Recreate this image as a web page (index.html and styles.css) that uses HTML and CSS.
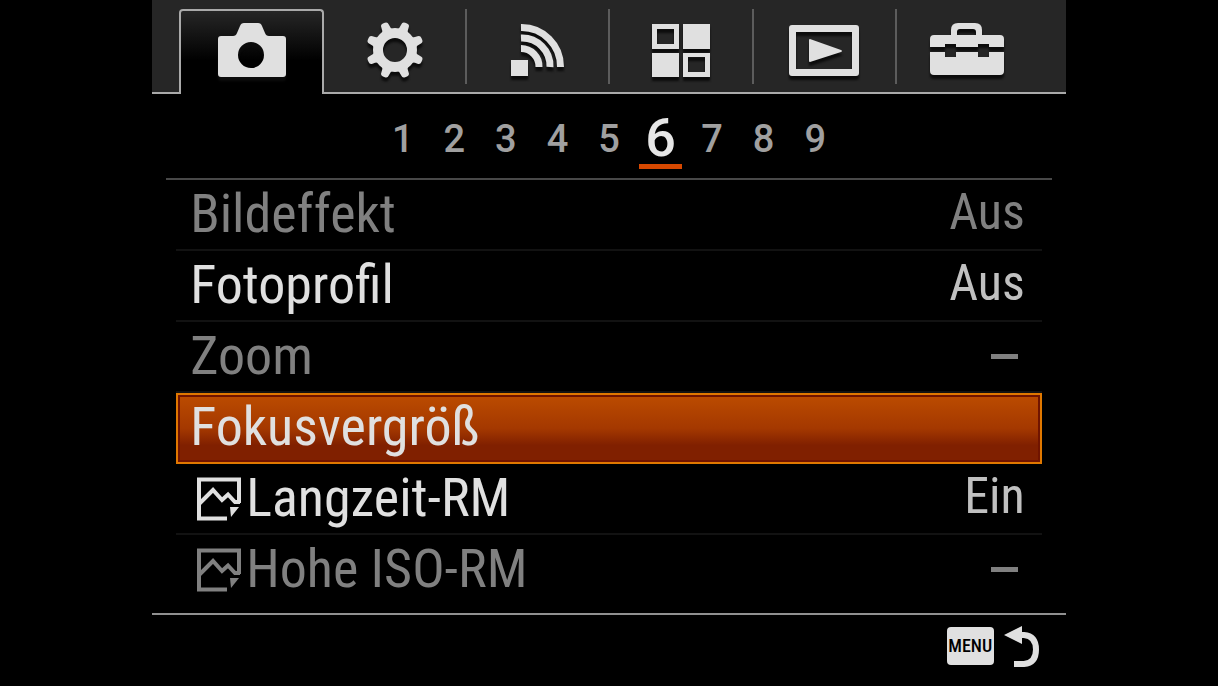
FILE: index.html
```html
<!DOCTYPE html>
<html lang="de">
<head>
  <meta charset="UTF-8">
  <meta name="viewport" content="width=device-width, initial-scale=1.0">
  <title>Menu</title>
  <link rel="stylesheet" href="styles.css">
</head>
<body>
  <div class="screen">
    <nav class="tabs">
      <button class="tab active" aria-label="Kamera">
        <svg width="80" height="72" viewBox="0 0 80 72">
          <path fill-rule="evenodd" d="M9 20h12q3 0 4-3l3-7q1-3 4-3h14q3 0 4 3l3 7q1 3 4 3h14q3 0 3 3v35q0 3-3 3H9q-3 0-3-3V23q0-3 3-3zM39 26a13 13 0 1 0 0 26a13 13 0 1 0 0-26z"/>
        </svg>
      </button>
      <button class="tab" aria-label="Einstellungen">
        <svg width="80" height="72" viewBox="0 0 80 72">
          <g transform="translate(40 34)">
            <circle r="17" fill="none" class="stroke" stroke-width="10"/>
            <path id="tooth" d="M-6-19Q-4-22-4-26Q-4-29-1-29H1Q4-29 4-26Q4-22 6-19z" transform="rotate(22.5)"/>
            <use href="#tooth" transform="rotate(45)"/>
            <use href="#tooth" transform="rotate(90)"/>
            <use href="#tooth" transform="rotate(135)"/>
            <use href="#tooth" transform="rotate(180)"/>
            <use href="#tooth" transform="rotate(225)"/>
            <use href="#tooth" transform="rotate(270)"/>
            <use href="#tooth" transform="rotate(315)"/>
          </g>
        </svg>
      </button>
      <button class="tab" aria-label="Drahtlos">
        <svg width="80" height="72" viewBox="0 0 80 72">
          <rect x="13" y="44" width="17" height="16"/>
          <path class="stroke" fill="none" stroke-width="7" d="M23 32.500A18 18 0 0 1 41 51M23 22A28 28 0 0 1 52 51M23 11.500A39 39 0 0 1 62.500 51"/>
        </svg>
      </button>
      <button class="tab" aria-label="Anwendungen">
        <svg width="80" height="72" viewBox="0 0 80 72">
          <path fill-rule="evenodd" d="M11 8h27v25H11zM16 13v15h17V13zM42 8h27v25H42zM11 37h27v24H11zM42 37h27v24H42zM47 41v15h17V41z"/>
        </svg>
      </button>
      <button class="tab" aria-label="Wiedergabe">
        <svg width="80" height="72" viewBox="0 0 80 72">
          <path fill-rule="evenodd" d="M8 9h64q3 0 3 3v45q0 3-3 3H8q-3 0-3-3V12q0-3 3-3zM12 16v37h56V16z"/>
          <path d="M25 24q0-1 1-1l31 11q2 1 0 2L26 46q-1 0-1-1z"/>
        </svg>
      </button>
      <button class="tab" aria-label="Setup">
        <svg width="80" height="72" viewBox="0 0 80 72">
          <path fill-rule="evenodd" d="M7 19h17v-5q0-7 7-7h17q7 0 7 7v5h18q4 0 4 4v8H62v-3H51v3H29v-3H18v3H3v-8q0-4 4-4zM30 19h19v-3q0-3-3-3H33q-3 0-3 3z"/>
          <path d="M3 36h15v5h11v-5h22v5h11v-5h15v19q0 4-4 4H7q-4 0-4-4z"/>
        </svg>
      </button>
    </nav>

    <nav class="pages">
      <button>1</button>
      <button>2</button>
      <button>3</button>
      <button>4</button>
      <button>5</button>
      <button class="current" aria-current="page">6</button>
      <button>7</button>
      <button>8</button>
      <button>9</button>
    </nav>

    <main class="menu">
      <button class="item" disabled><span>Bildeffekt</span><span class="value">Aus</span></button>
      <button class="item"><span>Fotoprofil</span><span class="value">Aus</span></button>
      <button class="item" disabled><span>Zoom</span><span class="dash"></span></button>
      <button class="item selected"><span>Fokusvergröß</span></button>
      <button class="item">
        <svg class="still" width="44" height="44" viewBox="0 0 44 44">
          <path d="M30 41.500H2v-39H42V26M2 27L16 13L25 23L31 17.500L38 25H43"/>
          <path class="fold" d="M33 30h9l-8 10z"/>
        </svg>
        <span>Langzeit-RM</span><span class="value">Ein</span>
      </button>
      <button class="item" disabled>
        <svg class="still" width="44" height="44" viewBox="0 0 44 44">
          <path d="M30 41.500H2v-39H42V26M2 27L16 13L25 23L31 17.500L38 25H43"/>
          <path class="fold" d="M33 30h9l-8 10z"/>
        </svg>
        <span>Hohe ISO-RM</span><span class="dash"></span>
      </button>
    </main>

    <footer class="footer">
      <button class="back">
        <span class="key">MENU</span>
        <svg width="36" height="44" viewBox="0 0 36 44">
          <path d="M0 10L18 1v18z"/>
          <path class="stroke" fill="none" stroke-width="6" d="M15 10h5q12 1 12 14.500T20 39H10"/>
        </svg>
      </button>
    </footer>
  </div>
</body>
</html>
```

FILE: styles.css
```css
* {
  box-sizing: border-box;
}

body {
  margin: 0;
  background: #000;
  color: #e0e0e0;
  font-family: "Liberation Sans Narrow", "Arial Narrow", "Roboto Condensed", "Liberation Sans", sans-serif;
}

button {
  margin: 0;
  padding: 0;
  border: none;
  background: none;
  color: inherit;
  font: inherit;
  cursor: pointer;
}

svg {
  display: block;
  fill: #e0e0e0;
}

.stroke {
  stroke: #e0e0e0;
}

.screen {
  width: 75%;
  margin: 0 auto;
}

.tabs {
  display: flex;
  height: 94px;
  padding: 9px 28px 0 27px;
  background: #262626;
  border-bottom: 2px solid #aaa;
}

.tab {
  display: flex;
  flex: 1;
  justify-content: center;
  height: 75px;
  padding-top: 7px;
  border-right: 2px solid #5c5c5c;
}

.tab svg {
  filter: drop-shadow(0 4px 1px #0c0c0c);
}

.tab:last-child {
  border-right: none;
}

.tab.active {
  height: 85px;
  padding-top: 5px;
  border: 2px solid #aaa;
  border-bottom: none;
  border-radius: 4px 4px 0 0;
  background: linear-gradient(#262626, #000 60%);
}

.pages {
  display: grid;
  grid-template-columns: repeat(9, 1fr);
  max-width: 464px;
  height: 84px;
  margin: 0 auto;
  padding-top: 16px;
}

.pages button {
  height: 58px;
  color: #a0a0a0;
  font-family: Roboto, sans-serif;
  font-size: 38px;
  font-weight: 500;
  line-height: 58px;
}

.pages .current {
  justify-self: center;
  width: 43px;
  height: 59px;
  border-bottom: 5px solid #d64800;
  color: #e6e6e6;
  font-size: 54px;
  line-height: 56px;
}

.menu {
  margin: 0 14px;
  padding: 0 10px 7px;
  border-top: 2px solid #484848;
}

.item {
  display: flex;
  align-items: flex-start;
  width: 100%;
  height: 71px;
  padding: 2px 17px 0 14px;
  border-bottom: 2px solid #121212;
  font-size: 54px;
  line-height: 64px;
  text-align: left;
  white-space: nowrap;
}

.item:disabled {
  color: #808080;
}

.item.selected {
  padding: 0 15px 0 12px;
  border: 2px solid #e07800;
  background: linear-gradient(#bc4c00, #a43800 50%, #802000 75%, #802000);
  box-shadow: inset 0 0 0 2px #701400;
}

.item:last-child {
  border-bottom: none;
}

.value {
  margin-left: auto;
  color: #c0c0c0;
  font-size: 50px;
  line-height: 60px;
}

.item:disabled .value {
  color: #808080;
}

.dash {
  width: 27px;
  height: 5px;
  margin: 30px 7px 0 auto;
  background: #808080;
}

.still {
  margin: 11px 5px 0 7px;
  fill: none;
  stroke: currentColor;
  stroke-width: 4;
}

.still .fold {
  fill: currentColor;
  stroke: none;
}

.footer {
  display: flex;
  justify-content: flex-end;
  padding: 10px 26px 0;
  border-top: 2px solid #909090;
}

.back {
  display: flex;
  align-items: flex-start;
  gap: 10px;
}

.key {
  width: 47px;
  height: 38px;
  margin-top: 2px;
  border-radius: 4px;
  background: #e0e0e0;
  color: #000;
  font-size: 18px;
  font-weight: 500;
  line-height: 38px;
  text-align: center;
}
```
